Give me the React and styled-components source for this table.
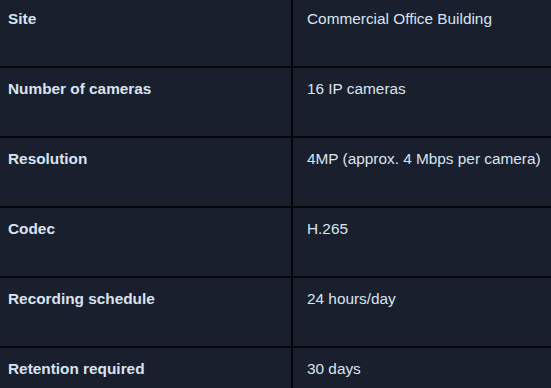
import React from "react";
import styled, { createGlobalStyle } from "styled-components";

const Global = createGlobalStyle`
  html, body { margin: 0; padding: 0; background: #1a1f2e; overflow: hidden; }
  body { font-family: "Liberation Sans", Arial, sans-serif; }
`;

const Table = styled.table`
  width: 551px;
  border-collapse: collapse;
  table-layout: fixed;
  background: #1a1f2e;
  color: #d9e3ef;
  font-size: 15.36px;
  line-height: 22.5px;
`;

const Row = styled.tr``;

const Cell = styled.td`
  box-sizing: border-box;
  vertical-align: top;
  padding: ${(p) => (p.$first ? "8px" : "10px")} 0 0 ${(p) => (p.$label ? "8px" : "14px")};
  height: ${(p) => (p.$first ? "67px" : "70px")};
  border-bottom: 2px solid #05070b;
  border-right: ${(p) => (p.$label ? "2px solid #05070b" : "none")};
  font-weight: ${(p) => (p.$label ? 700 : 400)};
  width: ${(p) => (p.$label ? "292px" : "auto")};
  white-space: nowrap;
`;

const rows = [
  ["Site", "Commercial Office Building"],
  ["Number of cameras", "16 IP cameras"],
  ["Resolution", "4MP (approx. 4 Mbps per camera)"],
  ["Codec", "H.265"],
  ["Recording schedule", "24 hours/day"],
  ["Retention required", "30 days"],
];

export default function App() {
  return (
    <>
      <Global />
      <Table>
        <tbody>
          {rows.map(([k, v], i) => (
            <Row key={k}>
              <Cell $label $first={i === 0}>{k}</Cell>
              <Cell $first={i === 0}>{v}</Cell>
            </Row>
          ))}
        </tbody>
      </Table>
    </>
  );
}
